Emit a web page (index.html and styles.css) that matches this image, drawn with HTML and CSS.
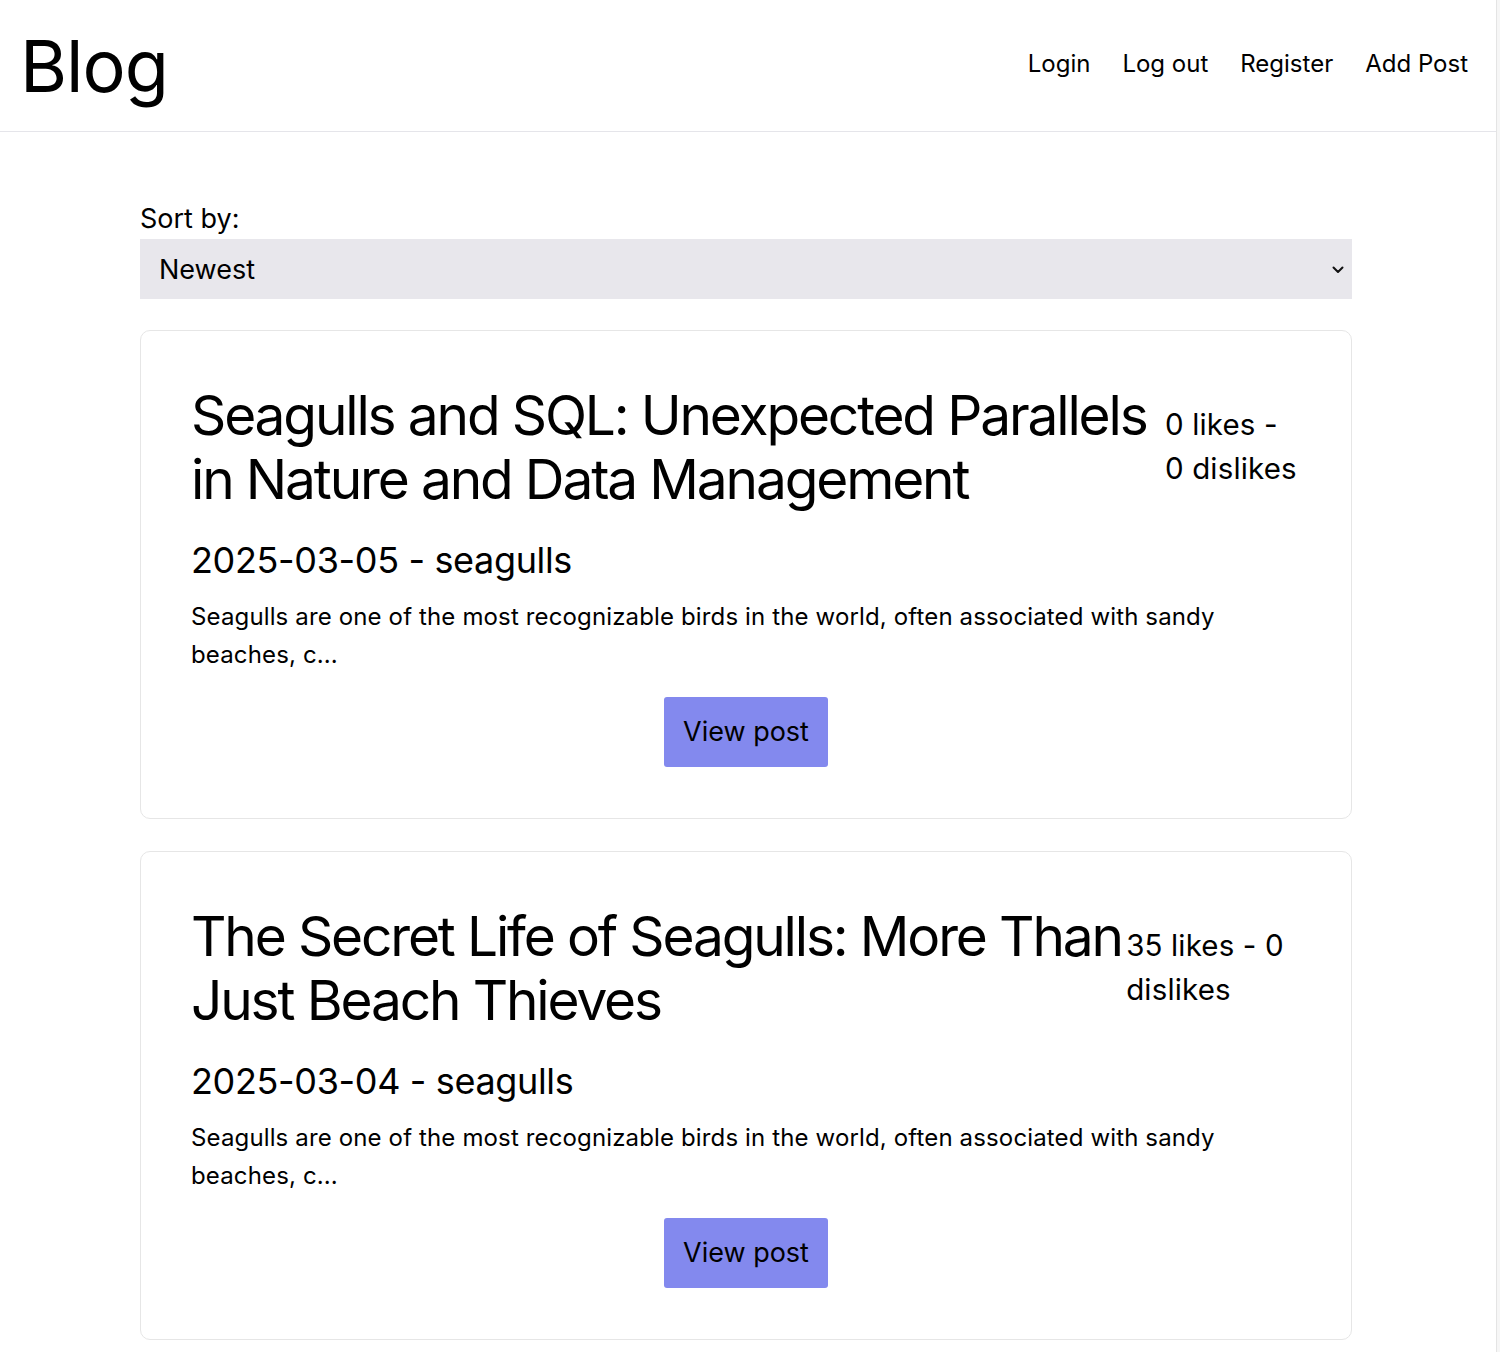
FILE: index.html
```html
<!DOCTYPE html>
<html lang="en">
<head>
<meta charset="utf-8">
<title>Blog</title>
<link rel="stylesheet" href="styles.css">
</head>
<body>
<div class="page">
  <header class="site-header">
    <h1 class="brand">Blog</h1>
    <nav class="nav">
      <a href="#">Login</a>
      <a href="#">Log out</a>
      <a href="#">Register</a>
      <a href="#">Add Post</a>
    </nav>
  </header>
  <main class="main">
    <div class="sort">
      <label class="sort-label" for="sort">Sort by:</label>
      <div class="select-wrap">
        <select id="sort" class="select">
          <option>Newest</option>
          <option>Oldest</option>
          <option>Most liked</option>
        </select>
        <svg class="chevron" width="12" height="8" viewBox="0 0 12 8"><path d="M1.5 1.5 L6 6 L10.5 1.5" fill="none" stroke="#111" stroke-width="2" stroke-linecap="round" stroke-linejoin="round"/></svg>
      </div>
    </div>

    <article class="card">
      <div class="card-head">
        <h2 class="post-title">Seagulls and SQL: Unexpected Parallels in Nature and Data Management</h2>
        <span class="likes">0 likes - 0 dislikes</span>
      </div>
      <h3 class="post-meta">2025-03-05 - seagulls</h3>
      <p class="excerpt">Seagulls are one of the most recognizable birds in the world, often associated with sandy beaches, c...</p>
      <div class="actions"><a class="btn" href="#">View post</a></div>
    </article>

    <article class="card">
      <div class="card-head">
        <h2 class="post-title">The Secret Life of Seagulls: More Than Just Beach Thieves</h2>
        <span class="likes">35 likes - 0 dislikes</span>
      </div>
      <h3 class="post-meta">2025-03-04 - seagulls</h3>
      <p class="excerpt">Seagulls are one of the most recognizable birds in the world, often associated with sandy beaches, c...</p>
      <div class="actions"><a class="btn" href="#">View post</a></div>
    </article>
  </main>
</div>
</body>
</html>
```
FILE: styles.css
```css
html {
  background: #f6f6f6;
}
body {
  margin: 0;
  font-family: Inter, "Noto Sans", sans-serif;
  color: #000;
}
.page {
  width: 1496px;
  min-height: 1352px;
  background: #fff;
  border-right: 1px solid #e4e4e4;
}
.site-header {
  display: flex;
  justify-content: space-between;
  align-items: center;
  height: 132px;
  padding: 0 28px 0 20px;
  border-bottom: 1px solid #e5e5ea;
  box-sizing: border-box;
}
.brand {
  margin: 0;
  font-size: 72px;
  font-weight: 400;
  line-height: 1;
  letter-spacing: -1px;
}
.nav {
  display: flex;
  gap: 32px;
  margin-top: -4px;
}
.nav a {
  color: #000;
  text-decoration: none;
  font-size: 24px;
}
.main {
  width: 1212px;
  margin-left: 140px;
  padding-top: 67px;
}
.sort-label {
  display: block;
  font-size: 27px;
  line-height: 40px;
}
.select-wrap {
  position: relative;
}
.select {
  display: block;
  width: 100%;
  height: 60px;
  appearance: none;
  -webkit-appearance: none;
  border: none;
  border-radius: 0;
  background: #e8e7ec;
  padding: 0 19px;
  font-family: inherit;
  font-size: 27px;
  color: #000;
}
.chevron {
  position: absolute;
  right: 8px;
  top: 27px;
}
.card {
  margin-top: 31px;
  border: 1px solid #e6e6e6;
  border-radius: 10px;
  padding: 52px 50px 51px 50px;
}
.card + .card {
  margin-top: 32px;
}
.card-head {
  display: flex;
  align-items: baseline;
}
.post-title {
  margin: 0;
  font-size: 55px;
  font-weight: 400;
  line-height: 64px;
  letter-spacing: -2.15px;
}
.likes {
  flex-shrink: 1.045;
  font-size: 29.5px;
  line-height: 44px;
  letter-spacing: 0.15px;
}
.post-meta {
  margin: 22px 0 0;
  font-size: 36px;
  font-weight: 400;
  line-height: 54px;
  letter-spacing: -0.35px;
}
.excerpt {
  margin: 11px 0 0;
  font-size: 24px;
  line-height: 38px;
  letter-spacing: 0.14px;
}
.actions {
  display: flex;
  justify-content: center;
  margin-top: 23px;
}
.btn {
  display: inline-block;
  background: #8389ee;
  color: #000;
  text-decoration: none;
  font-size: 27px;
  line-height: 70px;
  padding: 0 19px;
  border-radius: 3px;
}
```
